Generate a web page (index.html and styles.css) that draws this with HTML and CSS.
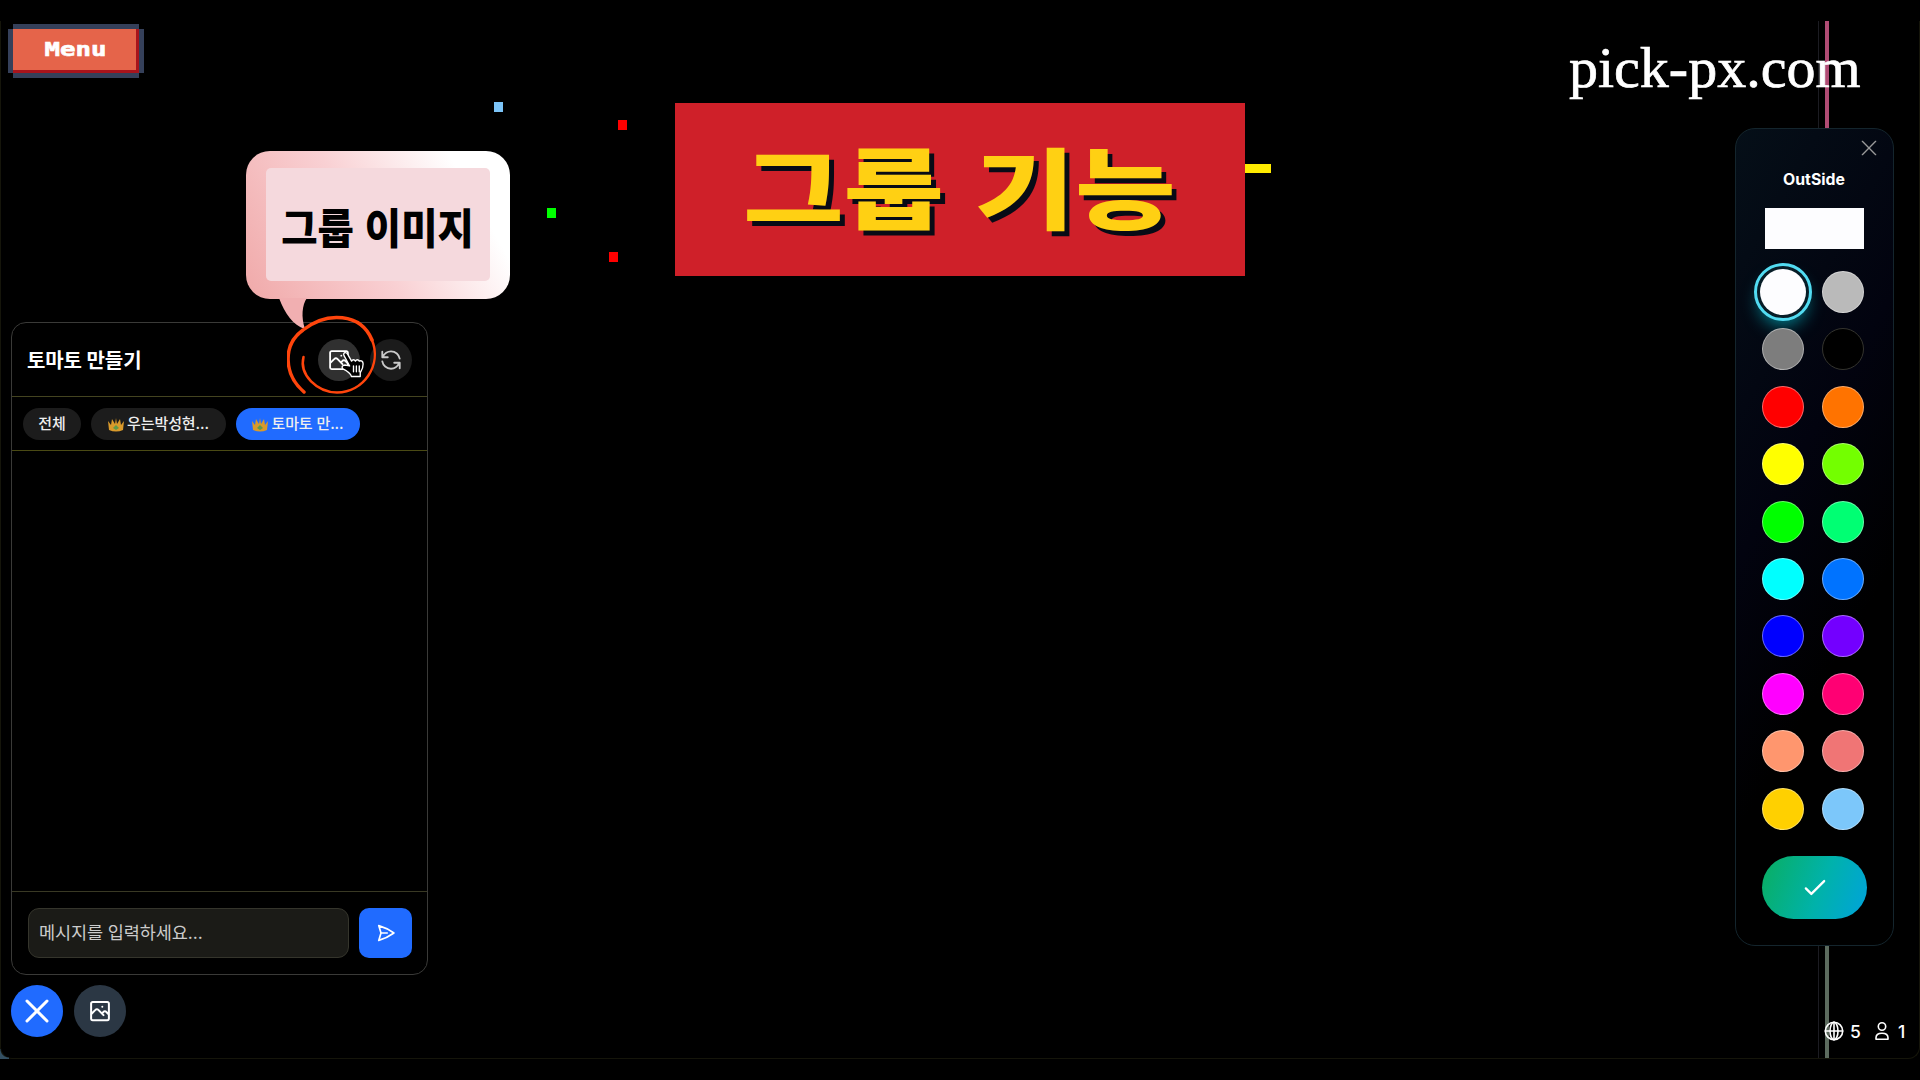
FILE: index.html
```html
<!DOCTYPE html>
<html lang="ko">
<head>
<meta charset="utf-8">
<title>pick-px.com</title>
<link rel="stylesheet" href="styles.css">
</head>
<body>
<svg width="0" height="0" class="defs">
  <symbol id="picture" viewBox="0 0 24 24"><path d="M2.300 15.500 7 10.800a2.200 2.200 0 0 1 3.200 0L15.800 16.500M14.200 14.500l1.500-1.500a2.200 2.200 0 0 1 3.200 0l2.800 2.800M4 22h16a1.700 1.700 0 0 0 1.700-1.700V4A1.700 1.700 0 0 0 20 2.300H4A1.700 1.700 0 0 0 2.300 4v16.300A1.700 1.700 0 0 0 4 22ZM14.500 7.300h.02"/></symbol>
  <symbol id="cross" viewBox="0 0 24 24"><path d="M2 2l20 20M22 2 2 22"/></symbol>
</svg>
<main class="stage">
  <div class="canvas">
    <i class="edge"></i><i class="stripe"></i>
    <i class="px sky"></i><i class="px red a"></i><i class="px green"></i><i class="px red b"></i><i class="px yellow"></i>
  </div>

  <button class="menu"><span>Menu</span></button>
  <h1 class="banner"><span>그룹 기능</span></h1>
  <div class="site">pick-px.com</div>

  <section class="chat">
    <header class="chat-head">
      <h2>토마토 만들기</h2>
      <button class="round lit"><svg><use href="#picture"/></svg></button>
      <button class="round"><svg viewBox="0 0 24 24"><path d="M2.500 3v6h6M21.500 21v-6h-6M3 8.500C5 4.500 8 2.500 12 2.500c5 0 8.700 3.600 9.500 8M21 15.500c-2 4-5 6-9 6-5 0-8.700-3.600-9.500-8"/></svg></button>
    </header>
    <nav class="tabs">
      <button class="tab all">전체</button>
      <button class="tab own"><svg class="crown" viewBox="0 0 16 14"><path class="gold" d="M0 3l3 4 1-6 3 5 1-6 1 6 3-5 1 6 3-4-1 9Q8 15 1 12Z"/><path class="gem" d="M5 10l3-3 3 3-3 2Z"/></svg>우는박성현...</button>
      <button class="tab own active"><svg class="crown" viewBox="0 0 16 14"><path class="gold" d="M0 3l3 4 1-6 3 5 1-6 1 6 3-5 1 6 3-4-1 9Q8 15 1 12Z"/><path class="gem" d="M5 10l3-3 3 3-3 2Z"/></svg>토마토 만...</button>
    </nav>
    <div class="messages"></div>
    <footer class="composer">
      <div class="input">메시지를 입력하세요...</div>
      <button class="send"><svg viewBox="0 0 24 24"><path d="M6 12 3.300 3.100A59.800 59.800 0 0 1 21.500 12 59.800 59.800 0 0 1 3.300 20.900L6 12Zm0 0h7.500"/></svg></button>
    </footer>
  </section>

  <div class="fabs">
    <button class="fab blue"><svg><use href="#cross"/></svg></button>
    <button class="fab slate"><svg><use href="#picture"/></svg></button>
  </div>

  <div class="bubble">
    <div class="bubble-inner"><span>그룹 이미지</span></div>
    <svg class="tail" viewBox="0 0 30 32"><path d="M0 0H28C23 7 22 19 26 31C14 27 6 16 0 0Z"/></svg>
  </div>
  <svg class="ring" viewBox="0 0 92 82"><path class="thick" d="M17 77C-3 60-5 30 16 15C40-4 74-2 85 25"/><path d="M85 25C95 50 77 77 50 77.500C30 77 12 60 16.500 42"/></svg>
  <svg class="hand" viewBox="0 0 26 28"><path d="M9 15 3 4C2 1 5 0 7 3l4 7c1-2 3-2 4 0 1-2 3-2 4 0 2-1 4 0 4 3 0 5-2 7-3 9v4h-9c-1-4-5-6-9-8-2-2 0-4 2-4Z"/><path d="M13 15v6M16 15v6M19 15v6"/></svg>

  <aside class="palette">
    <button class="close"><svg><use href="#cross"/></svg></button>
    <h3>OutSide</h3>
    <div class="preview"></div>
    <div class="colors">
      <i class="c-white selected"></i><i class="c-silver"></i>
      <i class="c-gray"></i><i class="c-black"></i>
      <i class="c-red"></i><i class="c-orange"></i>
      <i class="c-yellow"></i><i class="c-lime"></i>
      <i class="c-green"></i><i class="c-spring"></i>
      <i class="c-cyan"></i><i class="c-azure"></i>
      <i class="c-blue"></i><i class="c-violet"></i>
      <i class="c-magenta"></i><i class="c-rose"></i>
      <i class="c-salmon"></i><i class="c-coral"></i>
      <i class="c-gold"></i><i class="c-sky"></i>
    </div>
    <button class="confirm"><svg viewBox="0 0 24 18"><path d="M2 10l6 6L22 2"/></svg></button>
  </aside>

  <div class="status">
    <svg viewBox="0 0 20 20"><circle cx="10" cy="10" r="8.700"/><ellipse cx="10" cy="10" rx="4" ry="8.700"/><path d="M1.300 10h17.400M10 1.300v17.400"/></svg><b>5</b>
    <svg class="user" viewBox="0 0 16 20"><circle cx="8" cy="5.500" r="3.700"/><path d="M2 18.300v-1.500c0-3 2.500-4.600 6-4.600s6 1.600 6 4.600v1.500Z"/></svg><b>1</b>
  </div>
</main>
</body>
</html>
```
FILE: styles.css
```css
* { box-sizing: border-box; margin: 0; }
body { background: #000; font-family: Inter, "Noto Sans CJK KR", sans-serif; color: #fff; }
button { border: 0; padding: 0; background: none; color: inherit; font: inherit; display: flex; align-items: center; justify-content: center; }
svg { display: block; fill: none; stroke: currentColor; stroke-width: 2; stroke-linecap: round; stroke-linejoin: round; flex: none; }
.defs { position: absolute; }
.stage { position: relative; width: 1920px; height: 1080px; overflow: hidden; }

.canvas { position: absolute; inset: 21px 0 21px 0; border: 1px solid #15150a; border-top: 0; border-radius: 0 0 12px 12px; }
.canvas::before { content: ""; position: absolute; left: -1px; bottom: -1px; width: 9px; height: 10px; background: radial-gradient(circle at 100% 0, transparent 8px, #334f62 9px); }
.edge, .stripe { position: absolute; top: 0; bottom: 0; }
.edge { left: 1817px; width: 1px; background: #1c1c22; }
.stripe { left: 1824px; width: 4px; background: linear-gradient(#b04c74 0 50%, #5c6b5e 50%); }
.px { position: absolute; width: 9px; height: 10px; }
.sky { left: 493px; top: 81px; background: #7cc4f8; }
.red { background: #f00; }
.red.a { left: 617px; top: 99px; }
.red.b { left: 608px; top: 231px; }
.green { left: 546px; top: 187px; background: #0f0; }
.yellow { left: 1244px; top: 143px; width: 26px; height: 9px; background: #ffeb00; }

.menu { position: absolute; left: 13px; top: 29px; width: 126px; height: 44px; background: #e5644a; box-shadow: inset -3px -3px #a8141c, 0 -5px #35405a, 0 5px #35405a, -5px 0 #35405a, 5px 0 #35405a; }
.menu span { font: bold 19.500px/1 "DejaVu Sans Mono", monospace; -webkit-text-stroke: .6px #fff; transform: translate(-1px, -1px) scaleX(1.32); }

.banner { position: absolute; left: 675px; top: 103px; width: 570px; height: 173px; background: #cf2029; display: flex; align-items: center; justify-content: center; }
.banner span { font: 900 88px/1 "Noto Sans CJK KR", sans-serif; color: #ffd013; text-shadow: 4px 4.500px #080b16; white-space: nowrap; transform: translate(-1px, -6px) scaleX(1.24); }
.site { position: absolute; left: 1569px; top: 35px; font: 58px/66px "Liberation Serif", serif; -webkit-text-stroke: .7px #fff; white-space: nowrap; }

.chat { position: absolute; left: 11px; top: 322px; width: 417px; height: 653px; border: 1px solid #3a3a38; border-radius: 15px; display: flex; flex-direction: column; }
.chat-head { height: 74px; border-bottom: 1px solid #444420; display: flex; align-items: center; gap: 10px; padding: 0 15px 0 15px; }
.chat-head h2 { flex: 1; font-size: 20px; font-weight: 700; letter-spacing: -.1px; }
.round { width: 42px; height: 42px; border-radius: 50%; background: #1b1b1b; color: #c9c9c9; }
.round svg { width: 22px; height: 22px; }
.round.lit { background: #303030; color: #fff; }
.tabs { height: 54px; border-bottom: 1px solid #4a4a14; display: flex; align-items: center; gap: 10px; padding: 0 11px; }
.tab { height: 32px; border-radius: 16px; background: #1c1c1c; font-size: 15px; letter-spacing: -.1px; font-weight: 500; color: #eee; white-space: nowrap; padding-bottom: 2px; }
.all { width: 58px; }
.own { width: 135px; gap: 3px; }
.own.active { width: 124px; }
.active { background: #206bff; }
.crown { width: 16px; height: 14px; stroke: none; transform: translateY(2px); }
.gold { fill: #d99a2b; }
.gem { fill: #5f9a4a; }
.messages { flex: 1; }
.composer { height: 83px; border-top: 1px solid #393924; padding: 16px 15px 0 16px; display: flex; gap: 10px; }
.input { width: 321px; height: 50px; border: 1px solid #35352c; border-radius: 11px; background: #1b1b17; padding-left: 10px; font-size: 17.500px; letter-spacing: -.1px; line-height: 47px; color: #ccc; }
.send { width: 53px; height: 50px; border-radius: 10px; background: #206bff; }
.send svg { width: 20px; height: 20px; }

.fabs { position: absolute; left: 11px; top: 985px; display: flex; gap: 10.500px; }
.fab { width: 52px; height: 52px; border-radius: 50%; }
.fab svg { width: 22px; height: 22px; }
.blue { background: #206bff; }
.blue svg { width: 24px; height: 24px; stroke-width: 3; }
.slate { background: #2b3744; }
.slate svg { stroke-width: 2.200; }

.bubble { position: absolute; left: 246px; top: 151px; width: 264px; height: 148px; border-radius: 24px; background: linear-gradient(60deg, #f0a9a9, #f9d0d3 45%, #fff 82%); padding: 17px 20px 18px 20px; }
.bubble-inner { height: 100%; border-radius: 5px; background: #f5d9dd; display: flex; align-items: center; justify-content: center; }
.bubble-inner span { font: 900 42px/1 "Noto Sans CJK KR", sans-serif; color: #000; white-space: nowrap; transform: translate(-1px, 1px) scaleX(.94); }
.tail { position: absolute; left: 33px; top: 147px; width: 30px; height: 32px; stroke: none; fill: #f1afb1; }
.ring { position: absolute; left: 287px; top: 315px; width: 92px; height: 82px; stroke: #ff450c; stroke-width: 2.500; }
.thick { stroke-width: 3.500; }
.hand { position: absolute; left: 341px; top: 351px; width: 25px; height: 28px; stroke-width: 1.400; fill: #000; }

.palette { position: absolute; left: 1735px; top: 128px; width: 159px; height: 818px; border: 1px solid #14252d; border-radius: 20px; background: linear-gradient(120deg, #050f18, #02030f 40%, #000 65%); display: flex; flex-direction: column; align-items: center; }
.close { width: 14px; height: 14px; margin: 12px 0 0 108px; color: #999; }
.close svg { width: 16px; height: 16px; }
.palette h3 { font-size: 15.800px; line-height: 20px; font-weight: 700; margin: 15px 1px 0 0; }
.preview { width: 99px; height: 41px; margin: 18px 1px 22px 0; background: #fdfdff; }
.colors { display: grid; grid-template-columns: 42px 42px; column-gap: 18px; row-gap: 15.400px; margin-left: -3px; }
.colors i { width: 42px; height: 42px; border-radius: 50%; border: 1px solid #ffffff66; }
.colors .selected { width: 46px; height: 46px; margin: -2px; border: 0; outline: 3px solid #52dcf2; outline-offset: 3px; box-shadow: 0 0 0 4px #071d27, 0 10px 18px #00c8d8aa; }
.c-white { background: #fdfdff; } .c-silver { background: #bababa; }
.c-gray { background: #7d7d7d; } .colors .c-black { background: #000; border-color: #34342e; }
.c-red { background: #f00; } .c-orange { background: #ff7300; }
.c-yellow { background: #ff0; } .c-lime { background: #73ff00; }
.c-green { background: #0f0; } .c-spring { background: #00ff73; }
.c-cyan { background: #0ff; } .c-azure { background: #0073ff; }
.c-blue { background: #00f; } .c-violet { background: #7300ff; }
.c-magenta { background: #f0f; } .c-rose { background: #ff0073; }
.c-salmon { background: #ff966e; } .c-coral { background: #f07575; }
.c-gold { background: #ffd000; } .c-sky { background: #7cc7fa; }
.confirm { width: 105px; height: 63px; margin-top: 26px; border-radius: 32px; background: linear-gradient(110deg, #0aae60, #00b2aa 55%, #00a3dc); }
.confirm svg { width: 22px; height: 17px; stroke-width: 2.500; }

.status { position: absolute; left: 1824px; top: 1020px; display: flex; align-items: center; height: 22px; }
.status svg { width: 20px; height: 20px; stroke-width: 1.600; }
.status b { font-size: 17.500px; font-weight: 500; width: 11px; margin-left: 6px; }
.status .user { width: 16px; margin-left: 13px; }
.status .user + b { margin-left: 8px; }
```
